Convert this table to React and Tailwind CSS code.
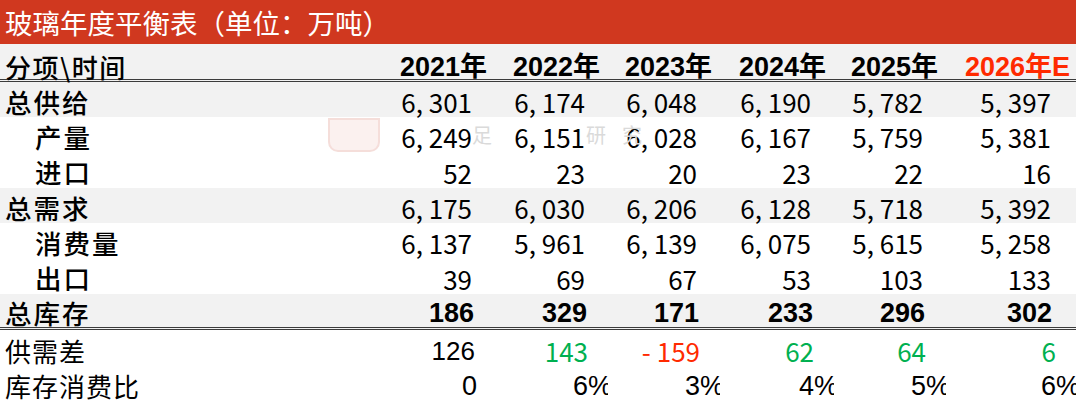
import React from "react";

const years = ["2021年", "2022年", "2023年", "2024年", "2025年"];

// main body rows
const rows = [
  { label: "总供给", sub: false, gray: true, vals: ["6, 301", "6, 174", "6, 048", "6, 190", "5, 782", "5, 397"] },
  { label: "产量", sub: true, gray: false, vals: ["6, 249", "6, 151", "6, 028", "6, 167", "5, 759", "5, 381"] },
  { label: "进口", sub: true, gray: false, vals: ["52", "23", "20", "23", "22", "16"] },
  { label: "总需求", sub: false, gray: true, vals: ["6, 175", "6, 030", "6, 206", "6, 128", "5, 718", "5, 392"] },
  { label: "消费量", sub: true, gray: false, vals: ["6, 137", "5, 961", "6, 139", "6, 075", "5, 615", "5, 258"] },
  { label: "出口", sub: true, gray: false, vals: ["39", "69", "67", "53", "103", "133"] },
];

const stock = ["186", "329", "171", "233", "296", "302"];

const gap = [
  { v: "126", c: "text-black font-['Liberation_Sans','Noto_Sans_CJK_SC',sans-serif]" },
  { v: "143", c: "text-[#00b050] font-['Noto_Sans_CJK_SC','Noto_Sans',sans-serif]" },
  { v: "- 159", c: "text-[#ff2a00] font-['Noto_Sans_CJK_SC','Noto_Sans',sans-serif]" },
  { v: "62", c: "text-[#00b050] font-['Noto_Sans_CJK_SC','Noto_Sans',sans-serif]" },
  { v: "64", c: "text-[#00b050] font-['Noto_Sans_CJK_SC','Noto_Sans',sans-serif]" },
  { v: "6", c: "text-[#00b050] font-['Noto_Sans_CJK_SC','Noto_Sans',sans-serif]" },
];

const ratio = ["0", "6%", "3%", "4%", "5%", "6%"];

const grid = "grid grid-cols-[382px_113px_113px_112px_114px_112px_130px]";

export default function App() {
  return (
    <div className="relative w-[1076px] h-[400px] overflow-hidden bg-white text-black font-['Noto_Sans_CJK_SC','Noto_Sans',sans-serif]">
      {/* title */}
      <div className="h-[44px] bg-[#d0381f] flex items-center pl-[5px] pt-[2px] text-white text-[27.5px] leading-none">
        玻璃年度平衡表（单位：万吨）
      </div>

      {/* header */}
      <div className={`${grid} h-[38px] bg-[#f2f2f2] border-b-[3px] border-double border-[#3c3c3c] items-end`}>
        <div className="pl-[5px] text-[26px] font-medium tracking-[1.5px] leading-none translate-y-[1px]">分项\时间</div>
        {years.map((y) => (
          <div key={y} className="text-right pr-[8px] text-[27px] font-bold leading-none translate-y-[2px] font-['Liberation_Sans','Noto_Sans_CJK_SC',sans-serif]">{y}</div>
        ))}
        <div className="text-right pr-[6px] text-[27px] font-bold leading-none translate-y-[2px] text-[#ff2a00] font-['Liberation_Sans','Noto_Sans_CJK_SC',sans-serif]">2026年E</div>
      </div>

      {rows.map((r) => (
        <div key={r.label} className={`${grid} h-[35.3px] items-center pt-[5px] ${r.gray ? "bg-[#f2f2f2]" : "bg-transparent"}`}>
          <div className={`${r.sub ? "pl-[35px]" : "pl-[5px]"} text-[26.5px] font-medium tracking-[2px] leading-none`}>{r.label}</div>
          {r.vals.map((v, i) => (
            <div key={i} className={`text-right ${i === 5 ? "pr-[25px]" : "pr-[23px]"} text-[26px] leading-none`}>{v}</div>
          ))}
        </div>
      ))}

      {/* total stock */}
      <div className={`${grid} h-[36.5px] items-center pt-[6px] bg-[#f2f2f2] border-b-[3px] border-double border-[#3c3c3c]`}>
        <div className="pl-[5px] text-[26.5px] font-medium tracking-[2px] leading-none">总库存</div>
        {stock.map((v, i) => (
          <div key={i} className={`text-right ${i === 5 ? "pr-[24px]" : "pr-[21px]"} text-[27px] font-bold leading-none font-['Liberation_Sans','Noto_Sans_CJK_SC',sans-serif]`}>{v}</div>
        ))}
      </div>

      <div className={`${grid} h-[36px] items-center pt-[5px]`}>
        <div className="pl-[5px] text-[26px] tracking-[1px] leading-none">供需差</div>
        {gap.map((g, i) => (
          <div key={i} className={`text-right pr-[20px] text-[26px] leading-none ${g.c}`}>{g.v}</div>
        ))}
      </div>

      <div className={`${grid} h-[36px] items-center pt-[4px]`}>
        <div className="pl-[5px] text-[26px] tracking-[1px] leading-none">库存消费比</div>
        {ratio.map((v, i) => (
          <div key={i} className={`overflow-hidden text-right text-[27px] leading-none font-['Liberation_Sans','Noto_Sans_CJK_SC',sans-serif] ${i === 0 ? "pr-[18px]" : "pr-0"}`}>
            <span className={i === 0 ? "" : "-mr-[4px] inline-block"}>{v}</span>
          </div>
        ))}
      </div>

      {/* faint watermark */}
      <div className="absolute left-[328px] top-[118px] w-[52px] h-[34px] rounded-b-[10px] border-2 border-[#f3d6d2] bg-[#fbeeec] opacity-80 pointer-events-none" />
      <div className="absolute left-[472px] top-[120px] text-[20px] text-[#dadada] pointer-events-none">足</div>
      <div className="absolute left-[586px] top-[120px] text-[20px] text-[#dadada] pointer-events-none">研</div>
      <div className="absolute left-[622px] top-[120px] text-[20px] text-[#dadada] pointer-events-none">究</div>
    </div>
  );
}
